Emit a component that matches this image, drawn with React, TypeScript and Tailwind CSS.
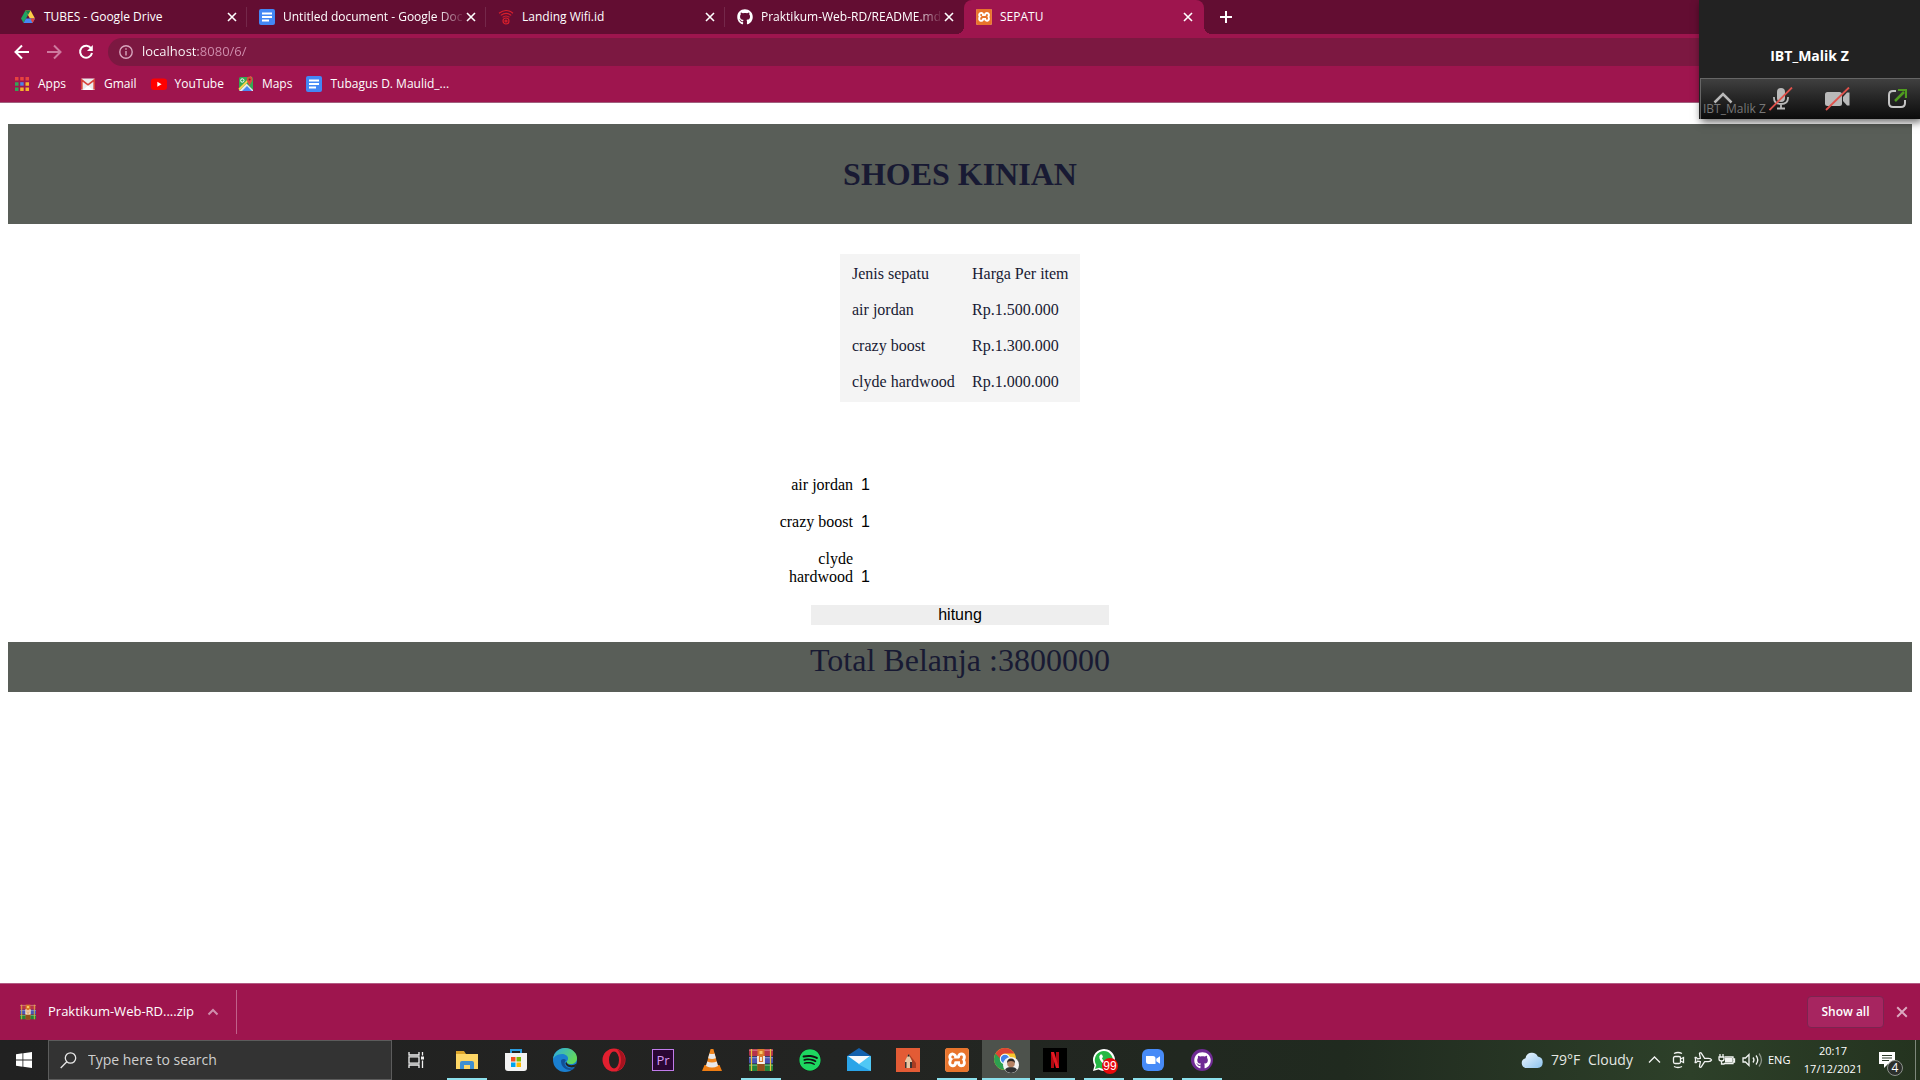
import type { ReactNode } from "react";
import { Plane } from "lucide-react";
import { FaGithub, FaSpotify } from "react-icons/fa";
import { SiXampp } from "react-icons/si";

const DocsIcon = () => (
  <svg width="16" height="16" viewBox="0 0 16 16" aria-hidden="true">
    <rect width="16" height="16" rx="2" fill="#4387f5" />
    <path d="M3 4.5h10M3 8h10M3 11.5h7" stroke="#fff" strokeWidth="1.8" />
  </svg>
);

const DriveIcon = () => (
  <svg width="16" height="16" viewBox="0 0 16 16" aria-hidden="true">
    <path d="M5.4 1.5 8 6 3.6 14 1 9.5z" fill="#1fa463" />
    <path d="M5.4 1.5h5.2L15 9.5H9.9z" fill="#ffcf48" />
    <path d="M5.4 1.5h5.2L8 6z" fill="#13854c" />
    <path d="M3.6 14 6 9.5h9L12.5 14z" fill="#4688f4" />
    <path d="M12.5 14 15 9.5h-4.6z" fill="#ea4335" />
  </svg>
);

const WifiIdIcon = () => (
  <svg width="16" height="16" viewBox="0 0 16 16" fill="none" stroke="#d9202c" strokeWidth="1.2" aria-hidden="true">
    <path d="M1 4.2q7-5.4 14 0M2.8 6.4q5.2-4.2 10.4 0M4.6 8.4q3.4-2.8 6.8 0" />
    <circle cx="8" cy="12" r="3" />
    <circle cx="8" cy="12" r="1" />
  </svg>
);

const XamppSmall = () => (
  <span className="flex size-4 rounded-xs bg-white text-[#e8742c]">
    <SiXampp size={16} />
  </span>
);

const XamppLarge = () => (
  <span className="flex size-6 rounded-sm bg-white text-[#e8742c]">
    <SiXampp size={24} />
  </span>
);

const WinrarIcon = ({ size }: { size: number }) => (
  <svg width={size} height={size} viewBox="0 0 24 24" aria-hidden="true">
    <rect y="1" width="24" height="7" rx="1" fill="#b5324a" />
    <rect y="8.5" width="24" height="7" rx="1" fill="#4855b5" />
    <rect y="16" width="24" height="7" rx="1" fill="#23843a" />
    <path d="M0 2.2h24M0 9.7h24M0 17.2h24" stroke="#fff" strokeOpacity=".4" />
    <path d="M2.5 1v22M21.5 1v22" stroke="#e7c33c" strokeWidth="1.2" />
    <rect x="8.5" y="1" width="7" height="22" fill="#d9792a" />
    <rect x="8.5" y="16" width="7" height="7" fill="#93501d" />
    <path d="M9 8v7h6V8M12 9v4" fill="none" stroke="#f5f0e6" strokeWidth="1.8" />
    <path d="M10.5 3h3v3h-3z" fill="#f6c56a" />
  </svg>
);

const AppsIcon = () => (
  <svg width="16" height="16" viewBox="0 0 16 16" aria-hidden="true">
    <path d="M1 1h3.500v3.500H1zM6.200 1h3.500v3.500H6.200zM11.500 1H15v3.500h-3.500z" fill="#e8433f" />
    <path d="M1 6.200h3.500v3.500H1zM1 11.500h3.500V15H1z" fill="#35a356" />
    <path d="M6.200 6.200h3.500v3.500H6.200z" fill="#4b82e8" />
    <path d="M11.500 6.200H15v3.500h-3.500zM6.200 11.500h3.500V15H6.200zM11.500 11.500H15V15h-3.500z" fill="#f5b32c" />
  </svg>
);

const GmailIcon = () => (
  <svg width="16" height="16" viewBox="0 0 16 16" aria-hidden="true">
    <rect x="1" y="2.500" width="14" height="11.500" rx="1" fill="#ececec" />
    <path d="M1.800 13.500V4L8 8.800 14.200 4v9.500" fill="none" stroke="#d8433b" strokeWidth="1.700" />
    <path d="M3 14 8 9.500l5 4.500z" fill="#fff" />
  </svg>
);

const YoutubeIcon = () => (
  <svg width="16" height="16" viewBox="0 0 16 16" aria-hidden="true">
    <rect y="2.500" width="16" height="11.500" rx="3" fill="#f00" />
    <path d="M6.300 5.700v5L10.600 8.200z" fill="#fff" />
  </svg>
);

const MapsIcon = () => (
  <svg width="16" height="16" viewBox="0 0 16 16" aria-hidden="true">
    <rect x="1" y="1" width="14" height="14" rx="1.500" fill="#35a853" />
    <path d="M1 15 8.500 7.500 15 14v1z" fill="#e9e9e9" />
    <path d="m4 15 5-5 5 5z" fill="#4a89f3" />
    <path d="M1 13.500 13.500 1" stroke="#fbd04a" strokeWidth="1.800" />
    <circle cx="4.300" cy="4.500" r="1.700" fill="none" stroke="#fff" strokeWidth="1" />
    <path d="M11.500 10C11 7.500 8.800 6 8.800 3.400a2.800 2.800 0 0 1 5.600 0C14.400 6 12 7.500 11.500 10z" fill="#dd4b3e" />
    <circle cx="11.600" cy="3.400" r="1" fill="#7d231d" />
  </svg>
);

const Cross = ({ size = 10 }: { size?: number }) => (
  <svg width={size} height={size} viewBox="0 0 10 10" stroke="currentColor" strokeWidth="1.600" aria-hidden="true">
    <path d="m1 1 8 8M9 1 1 9" />
  </svg>
);

type Tab = { title: string; icon: ReactNode; active?: boolean };

const tabs: Tab[] = [
  { title: "TUBES - Google Drive", icon: <DriveIcon /> },
  { title: "Untitled document - Google Doc", icon: <DocsIcon /> },
  { title: "Landing Wifi.id", icon: <WifiIdIcon /> },
  { title: "Praktikum-Web-RD/README.md", icon: <FaGithub size={16} /> },
  { title: "SEPATU", icon: <XamppSmall />, active: true },
];

function TabStrip() {
  return (
    <div className="flex h-[34px] items-stretch bg-[#630d32] pl-2">
      {tabs.map((tab, i) => (
        <div
          key={tab.title}
          className={
            tab.active
              ? "relative flex w-60 items-center rounded-t-lg bg-[#9e154e] pl-3"
              : "relative flex w-[239px] items-center pl-3"
          }
        >
          {tab.active && (
            <>
              <span className="absolute bottom-0 -left-2 size-2 bg-[radial-gradient(circle_at_0_0,#630d32_8px,#9e154e_8px)]" />
              <span className="absolute -right-2 bottom-0 size-2 bg-[radial-gradient(circle_at_100%_0,#630d32_8px,#9e154e_8px)]" />
            </>
          )}
          {tab.icon}
          <span
            className={
              tab.title.length > 20
                ? "ml-2 w-[182px] text-xs whitespace-nowrap [mask-image:linear-gradient(90deg,#000_155px,transparent_182px)]"
                : "ml-2 w-[182px] text-xs whitespace-nowrap"
            }
          >
            {tab.title}
          </span>
          <button type="button" aria-label={`Close ${tab.title}`} className="ml-px flex">
            <Cross />
          </button>
          {i < 3 && <span className="absolute right-0 h-5 w-px bg-[#83406088] self-center" />}
        </div>
      ))}
      <button type="button" aria-label="New tab" className="ml-4 flex items-center">
        <svg width="12" height="12" viewBox="0 0 12 12" stroke="#fff" strokeWidth="2">
          <path d="M6 0v12M0 6h12" />
        </svg>
      </button>
    </div>
  );
}

function AddressRow() {
  return (
    <div className="flex h-9 items-start pt-1 pl-3.5">
      <div className="flex h-7 shrink-0 items-center gap-4">
        <button type="button" aria-label="Back">
          <svg width="16" height="16" viewBox="0 0 16 16" fill="none" stroke="#fff" strokeWidth="2">
            <path d="M15 8H2M8 1.500 1.500 8 8 14.500" />
          </svg>
        </button>
        <button type="button" aria-label="Forward">
          <svg width="16" height="16" viewBox="0 0 16 16" fill="none" stroke="#ce7a9f" strokeWidth="2">
            <path d="M1 8h13M8 1.500 14.500 8 8 14.500" />
          </svg>
        </button>
        <button type="button" aria-label="Reload">
          <svg width="16" height="16" viewBox="0 0 16 16" fill="none" stroke="#fff" strokeWidth="2">
            <path d="M13.200 4.500A6 6 0 1 0 14 9" />
            <path d="M14.800 1v6H9z" fill="#fff" stroke="none" />
          </svg>
        </button>
      </div>
      <div className="ml-3.5 flex h-7 flex-1 items-center rounded-l-full bg-[#7c1841] pl-[11px]">
        <svg width="14" height="14" viewBox="0 0 14 14" fill="none" stroke="#d8a6bd" strokeWidth="1.400" aria-hidden="true">
          <circle cx="7" cy="7" r="6.200" />
          <path d="M7 6v4.500M7 3.300v1.500" />
        </svg>
        <input
          aria-label="Address"
          defaultValue="localhost:8080/6/"
          className="ml-[9px] flex-1 bg-[linear-gradient(90deg,#ffffff_56px,#d08fae_56px)] bg-clip-text text-[13px] text-transparent outline-none"
        />
      </div>
    </div>
  );
}

function Bookmark({ icon, label }: { icon: ReactNode; label: string }) {
  return (
    <a href="#" className="flex items-center gap-2">
      {icon}
      {label}
    </a>
  );
}

function Bookmarks() {
  return (
    <nav className="flex h-[33px] items-center gap-3.5 border-b border-[#a0607e] pb-1 pl-3.5 text-xs">
      <Bookmark icon={<AppsIcon />} label="Apps" />
      <Bookmark icon={<GmailIcon />} label="Gmail" />
      <Bookmark icon={<YoutubeIcon />} label="YouTube" />
      <Bookmark icon={<MapsIcon />} label="Maps" />
      <Bookmark icon={<DocsIcon />} label="Tubagus D. Maulid_..." />
    </nav>
  );
}

const prices = [
  ["air jordan", "Rp.1.500.000"],
  ["crazy boost", "Rp.1.300.000"],
  ["clyde hardwood", "Rp.1.000.000"],
];

function ShopPage() {
  return (
    <main className="flex-1 bg-white px-2 pt-[21px] font-['Liberation_Serif',serif] text-base text-black">
      <h1 className="bg-[#595e58] py-8 text-center text-[32px] leading-9 font-bold text-[#181a33]">SHOES KINIAN</h1>
      <table className="mx-auto mt-[30px] w-60 border-separate border-spacing-0 bg-[#f4f4f4] py-0.5 text-left text-[#181a33]">
        <thead>
          <tr className="h-9">
            <th className="w-[132px] pl-3 font-normal whitespace-nowrap">Jenis sepatu</th>
            <th className="font-normal whitespace-nowrap">Harga Per item</th>
          </tr>
        </thead>
        <tbody>
          {prices.map(([name, price]) => (
            <tr key={name} className="h-9">
              <td className="pl-3 whitespace-nowrap">{name}</td>
              <td>{price}</td>
            </tr>
          ))}
        </tbody>
      </table>
      <form className="mx-auto mt-[74px] flex w-[374px] flex-col gap-[19px]">
        {prices.map(([name]) => (
          <div key={name} className="flex items-end gap-2">
            <label htmlFor={name} className="w-20 text-right leading-[18px]">
              {name}
            </label>
            <input
              id={name}
              defaultValue="1"
              className="h-[18px] min-w-0 flex-1 font-['Liberation_Sans',sans-serif] text-base leading-[18px] outline-none"
            />
          </div>
        ))}
        <button
          type="button"
          className="h-5 w-[298px] self-center bg-[#eeeeee] font-['Liberation_Sans',sans-serif] text-base leading-5"
        >
          hitung
        </button>
      </form>
      <p className="mt-[17px] bg-[#595e58] pb-3.5 text-center text-[32px] leading-9 text-[#181a33]">
        Total Belanja :3800000
      </p>
    </main>
  );
}

function DownloadBar() {
  return (
    <div className="flex h-[57px] items-center border-t border-[#b35a83] bg-[#9e154e] pr-3">
      <div className="flex h-11 w-[237px] items-center border-r border-[#c0618a] pl-5">
        <WinrarIcon size={16} />
        <span className="ml-3 w-[145px] text-[13px] whitespace-nowrap">Praktikum-Web-RD....zip</span>
        <button type="button" aria-label="Download options" className="ml-3.5">
          <svg width="12" height="8" viewBox="0 0 12 8" fill="none" stroke="#cf8fac" strokeWidth="2">
            <path d="m1.500 6.500 4.500-4.500 4.500 4.500" />
          </svg>
        </button>
      </div>
      <button
        type="button"
        className="ml-auto h-8 w-[77px] rounded border border-[#7c2450] bg-[#a72560] text-xs font-semibold"
      >
        Show all
      </button>
      <button type="button" aria-label="Close downloads bar" className="ml-3 text-[#dca9c0]">
        <Cross size={12} />
      </button>
    </div>
  );
}

const apps: { name: string; icon: ReactNode; open?: boolean; current?: boolean }[] = [
  {
    name: "File Explorer",
    open: true,
    icon: (
      <svg width="24" height="24" viewBox="0 0 24 24">
        <path d="M1 3h8l2 3h11v3H1z" fill="#dda52b" />
        <rect x="1" y="6" width="22" height="15" fill="#fdd666" />
        <path d="M5 21v-6q0-2 2-2h10q2 0 2 2v6h-4v-4H9v4z" fill="#3f8fd2" />
      </svg>
    ),
  },
  {
    name: "Microsoft Store",
    icon: (
      <svg width="24" height="24" viewBox="0 0 24 24">
        <path d="M7 5V2h10v3" fill="none" stroke="#2b9de0" strokeWidth="2" />
        <path d="M1 5h22v15q0 3-3 3H4q-3 0-3-3z" fill="#f3f3f3" />
        <path d="M7 9h4.500v4.500H7z" fill="#f25022" />
        <path d="M12.500 9H17v4.500h-4.500z" fill="#7fba00" />
        <path d="M7 14.500h4.500V19H7z" fill="#00a4ef" />
        <path d="M12.500 14.500H17V19h-4.500z" fill="#ffb900" />
      </svg>
    ),
  },
  {
    name: "Edge",
    icon: (
      <svg width="24" height="24" viewBox="0 0 24 24">
        <defs>
          <linearGradient id="edge-top" x1="0" y1="0" x2="1" y2=".5">
            <stop offset="0" stopColor="#2aa8e8" />
            <stop offset="1" stopColor="#63d95b" />
          </linearGradient>
        </defs>
        <circle cx="12" cy="12" r="12" fill="#1a7fd0" />
        <path d="M0 11C1 4 6 0 12 0c7 0 12 5 12 10 0 4-3 6-6 6-4 0-5-2-4-3 1-1 1-2 1-3 0-2-3-4-6-4-5 0-8 3-9 5z" fill="url(#edge-top)" />
        <path d="M8 13c0 6 5 9 9 9 2 0 4-1 5-2-2 1-8 1-10-3-1-2 0-4 1-5-2-2-5-1-5 1z" fill="#124f96" />
        <path d="M23.500 15.500c-3 2.500-9 2.500-10-1.500l-1 1c0 4 6 5.500 10 3.500z" fill="#222321" />
      </svg>
    ),
  },
  {
    name: "Opera",
    icon: (
      <svg width="24" height="24" viewBox="0 0 24 24">
        <circle cx="12" cy="12" r="11.500" fill="#e21f2f" />
        <path d="M15 1a11.500 11.500 0 0 1 0 22q4-5 4-11T15 1z" fill="#a5131f" />
        <ellipse cx="12" cy="12" rx="5" ry="8.500" fill="#222321" />
      </svg>
    ),
  },
  {
    name: "Premiere Pro",
    icon: (
      <span className="flex size-[22px] items-center justify-center border border-[#c07bea] bg-[#2a0634] text-[13px] leading-4 text-[#d79bf5]">
        Pr
      </span>
    ),
  },
  {
    name: "VLC",
    icon: (
      <svg width="24" height="24" viewBox="0 0 24 24">
        <path d="M4.500 17h15l2.500 6H2z" fill="#ef7d12" />
        <path d="M10.600 1h2.800l4.600 17q-6 3-12 0z" fill="#f0841b" />
        <path d="m9.400 5.500-1.300 4.700q4 1.500 7.800 0l-1.300-4.700q-2.600 1-5.200 0zM7.200 13.500 6 18q6 3 12 0l-1.200-4.500q-4.800 2-9.600 0z" fill="#e9e9e9" />
      </svg>
    ),
  },
  { name: "WinRAR", open: true, icon: <WinrarIcon size={24} /> },
  {
    name: "Spotify",
    icon: (
      <span className="rounded-full bg-[#111] text-[#1ed760]">
        <FaSpotify size={22} />
      </span>
    ),
  },
  {
    name: "Mail",
    icon: (
      <svg width="24" height="24" viewBox="0 0 24 24">
        <path d="M0 8 12 0l12 8v4H0z" fill="#1361ae" />
        <path d="M0 8h24v15H0z" fill="#2aa4e8" />
        <path d="M24 8v15L11 16z" fill="#50c8f5" />
        <path d="M1 8h22l-11 8z" fill="#f5f9fc" />
      </svg>
    ),
  },
  {
    name: "Sketchbook",
    icon: (
      <svg width="24" height="24" viewBox="0 0 24 24">
        <path d="M0 0h24v24H0z" fill="#e35b35" />
        <path d="m13 6 7 9v5H9z" fill="#a83c22" />
        <path d="M9 20v-7l3.500-7 3.500 7v7z" fill="#e7c7a4" />
        <path d="M9 14h1.500v6H9zM14 14h2v6h-2z" fill="#3a3433" />
        <path d="m11.300 8.400 1.200-2.400 1.200 2.400z" fill="#222" />
      </svg>
    ),
  },
  { name: "XAMPP", open: true, icon: <XamppLarge /> },
  {
    name: "Chrome",
    open: true,
    current: true,
    icon: (
      <svg width="26" height="26" viewBox="0 0 26 26">
        <circle cx="12" cy="12" r="11" fill="#f9c82d" />
        <path d="M2.500 6.500A11 11 0 0 0 12 23l4-8-4-3z" fill="#2d9f50" />
        <path d="M2.500 6.500A11 11 0 0 1 21.500 6.500H12q-4 0-5 5z" fill="#dd4334" />
        <circle cx="12" cy="12" r="5.200" fill="#fff" />
        <circle cx="12" cy="12" r="4.200" fill="#4382ea" />
        <circle cx="18" cy="18" r="8" fill="#f2f2f2" />
        <path d="M12 23q1-3 6-3t6 3q-2.500 3-6 3t-6-3z" fill="#2f3133" />
        <circle cx="18" cy="16.500" r="3.800" fill="#b48163" />
        <path d="M14 16q0-4.500 4-4.500t4 4.500q-1-2-4-2t-4 2z" fill="#282422" />
      </svg>
    ),
  },
  {
    name: "Netflix",
    open: true,
    icon: (
      <svg width="24" height="24" viewBox="0 0 24 24">
        <path d="M0 0h24v24H0z" fill="#000" />
        <path d="M8 4h3v16H8zM13 4h3v16h-3z" fill="#b10912" />
        <path d="M8 4h3l5 16h-3z" fill="#e51a24" />
      </svg>
    ),
  },
  {
    name: "WhatsApp",
    open: true,
    icon: (
      <span className="relative flex">
        <svg width="24" height="24" viewBox="0 0 24 24">
          <path d="M1 23 2.500 17.500A11 11 0 1 1 6.500 21.500z" fill="#fff" />
          <path d="M3 21 4.300 17A9 9 0 1 1 7.300 19.800z" fill="#25b844" />
          <path d="M8.500 6.500q-2 1.500-1 4 2 5 6.500 6.500 2.500.5 3.500-1.500v-1.500L15 12.800l-1.400 1.400Q11 13 9.900 10.300L11 9l-1-2.500z" fill="#fff" />
        </svg>
        <span className="absolute top-2.5 left-2.5 flex size-4 items-center justify-center rounded-full bg-[#e8090c] font-['Liberation_Sans',sans-serif] text-xs text-white">
          99
        </span>
      </span>
    ),
  },
  {
    name: "Zoom",
    open: true,
    icon: (
      <svg width="22" height="22" viewBox="0 0 22 22">
        <rect width="22" height="22" rx="6" fill="#478bf7" />
        <path d="M4 7h7q2.500 0 2.500 2.500V15h-7Q4 15 4 12.500zM14.300 9.700 18 7.300v7.400l-3.700-2.400z" fill="#fff" />
      </svg>
    ),
  },
  {
    name: "GitHub Desktop",
    open: true,
    icon: (
      <span className="flex size-[22px] items-center justify-center rounded-full bg-[#6f2b94] text-white">
        <FaGithub size={17} />
      </span>
    ),
  },
];

function Tray() {
  return (
    <div className="ml-auto flex items-center">
      <svg width="22" height="16" viewBox="0 0 22 16" aria-hidden="true">
        <defs>
          <linearGradient id="cloud" x1="0" y1="0" x2="1" y2="1">
            <stop offset="0" stopColor="#f0f8ff" />
            <stop offset="1" stopColor="#8cc3ee" />
          </linearGradient>
        </defs>
        <path d="M5 16a5 5 0 0 1-.5-9.800A6.500 6.500 0 0 1 16.800 4.500 5.800 5.800 0 0 1 16.500 16z" fill="url(#cloud)" />
      </svg>
      <span className="ml-2 w-[37px] text-sm whitespace-nowrap text-[#e4e8e3]">79°F</span>
      <span className="w-[60px] text-sm text-[#e4e8e3]">Cloudy</span>
      <svg width="104" height="18" viewBox="0 0 104 18" fill="none" stroke="#f2f4f2" strokeWidth="1.300" aria-hidden="true">
        <path d="m1 11.500 5.500-5.500 5.500 5.500" />
        <rect x="25.500" y="5.500" width="7" height="7" rx="1.500" />
        <path d="m32.500 8 3-1.500v5l-3-1.500M26 2.500q4-2 8 0M26 15.500q4 2 8 0" />
        <g transform="rotate(45 54 9)">
          <Plane x={45} y={0} size={18} strokeWidth={1.700} stroke="#f2f4f2" />
        </g>
        <path d="M77 6h8v6.500h-9M85 8h1.500v3H85" />
        <path d="M77 7h7v4.500h-7z" fill="#f2f4f2" stroke="none" />
        <path d="M72 3v3M75 3v3M71 6h5v2q0 2-2.500 2T71 8zM73.500 10v3h3" />
        <path d="M95 7h2.500L101 3.500v11L97.500 11H95z" />
      </svg>
      <svg width="12" height="18" viewBox="0 0 12 18" fill="none" stroke="#f2f4f2" strokeWidth="1.300" aria-hidden="true">
        <path d="M1 6.500q2 2.500 0 5M4 4.500q3.500 4.500 0 9" />
        <path d="M7 2.500q5 6.500 0 13" stroke="#8b9489" />
      </svg>
      <span className="ml-1 w-[33px] text-[11px] text-white">ENG</span>
      <div className="w-16 text-center text-[11px] leading-[18px] whitespace-nowrap text-white">
        20:17
        <br />
        17/12/2021
      </div>
      <button type="button" aria-label="4 notifications" className="relative mr-5 ml-3.5 flex h-10 w-4 items-center">
        <svg width="16" height="16" viewBox="0 0 16 16">
          <path d="M0 0h16v12H9l-4 4v-4H0z" fill="#fff" />
          <path d="M3 3.500h10M3 6h10M3 8.500h7" stroke="#2b3a29" strokeWidth="1.200" />
        </svg>
        <span className="absolute top-5 left-2 flex size-4 items-center justify-center rounded-full border border-[#8d928c] bg-[#2b2f2b] text-xs text-white">
          4
        </span>
      </button>
      <span className="mr-1 h-10 w-px bg-[#7d877b]" />
    </div>
  );
}

function Taskbar() {
  return (
    <footer className="flex h-10 items-center bg-[linear-gradient(90deg,#212121_0%,#232422_45%,#202a1f_70%,#2d4029_88%,#24331f_100%)]">
      <button type="button" aria-label="Start" className="flex w-12 justify-center">
        <svg width="16" height="16" viewBox="0 0 16 16" fill="#fff">
          <path d="M0 2.200 6.500 1.300v6.300H0zM7.300 1.200 16 0v7.600H7.300zM0 8.400h6.500v6.300L0 13.800zM7.300 8.400H16V16l-8.700-1.200z" />
        </svg>
      </button>
      <div className="flex h-10 w-[344px] items-center border border-[#5c5c5c] bg-[#333333] pl-[11px]">
        <svg width="17" height="17" viewBox="0 0 17 17" fill="none" stroke="#e8e8e8" strokeWidth="1.300" aria-hidden="true">
          <circle cx="10.500" cy="6" r="5.200" />
          <path d="M6.800 9.700.7 16" />
        </svg>
        <input
          aria-label="Search"
          placeholder="Type here to search"
          className="ml-[11px] flex-1 text-sm outline-none placeholder:text-[#cfcfcf]"
        />
      </div>
      <button type="button" aria-label="Task view" className="mr-[3px] flex w-12 justify-center">
        <svg width="16" height="16" viewBox="0 0 16 16" fill="none" stroke="#f2f2f2" strokeWidth="1.300">
          <path d="M1 0v3h10V0M1 16v-3h10v3M1 4.800h10v6.400H1zM14.500 0v3.500M14.500 8.500V16" />
          <path d="M13 4.500h3v3h-3z" fill="#f2f2f2" stroke="none" />
        </svg>
      </button>
      <div className="flex">
        {apps.map((app) => (
          <button
            key={app.name}
            type="button"
            aria-label={app.name}
            className={
              app.current
                ? "relative mr-px flex h-10 w-12 items-center justify-center bg-[#4d524c]"
                : "relative mr-px flex h-10 w-12 items-center justify-center"
            }
          >
            {app.icon}
            {app.open && (
              <span
                className={
                  app.current ? "absolute inset-x-0 bottom-0 h-0.5 bg-[#8ce0ec]" : "absolute inset-x-1 bottom-0 h-0.5 bg-[#8ce0ec]"
                }
              />
            )}
          </button>
        ))}
      </div>
      <Tray />
    </footer>
  );
}

function CallOverlay() {
  return (
    <aside className="absolute top-0 right-0 w-[221px] bg-[#222222] shadow-[2px_3px_8px_rgba(0,0,0,0.6)]">
      <div className="flex h-[78px] items-end justify-center pb-3 text-sm leading-5 font-bold text-white">
        IBT_Malik Z
      </div>
      <div className="relative ml-px flex h-[41px] items-center border-t border-l border-[#666] bg-linear-to-b from-[#404040] to-[#0c0c0c] pl-3">
        <button type="button" aria-label="Collapse">
          <svg width="20" height="20" viewBox="0 0 20 20" fill="none" stroke="#b9b9b9" strokeWidth="2.500">
            <path d="m1.500 13.500 8.500-8.500 8.500 8.500" />
          </svg>
        </button>
        <button type="button" aria-label="Unmute" className="ml-9">
          <svg width="24" height="24" viewBox="0 0 24 24" fill="none">
            <rect x="8" y="1" width="8" height="14" rx="4" fill="#b9b9b9" />
            <path d="M5 10v1q0 6 7 6t7-6v-1M12 17v4M8 21.500h8" stroke="#b9b9b9" strokeWidth="1.800" />
            <path d="M.500 23 23 .500" stroke="#e0524c" strokeWidth="1.800" />
          </svg>
        </button>
        <button type="button" aria-label="Start video" className="ml-8">
          <svg width="25" height="24" viewBox="0 0 25 24">
            <rect x="0" y="5" width="17" height="14" rx="2.500" fill="#b9b9b9" />
            <path d="m18 10 4-4.500h2.500v13H22L18 14z" fill="#b9b9b9" />
            <path d="M1 23 24 .500" stroke="#e0524c" strokeWidth="1.800" />
          </svg>
        </button>
        <button type="button" aria-label="Open in window" className="ml-[37px]">
          <svg width="20" height="20" viewBox="0 0 20 20" fill="none" strokeWidth="2">
            <path d="M9 2H6Q2 2 2 6v8q0 4 4 4h8q4 0 4-4v-3" stroke="#c4c4c4" />
            <path d="m8 12 9-9" stroke="#4f9a1f" strokeWidth="2.500" />
            <path d="M11 1h8v8" stroke="#4f9a1f" strokeWidth="2.200" />
          </svg>
        </button>
        <span className="absolute bottom-0 left-0.5 text-xs leading-5 text-[#777]">IBT_Malik Z</span>
      </div>
    </aside>
  );
}

export default function App() {
  return (
    <div className="relative flex min-h-screen flex-col overflow-hidden bg-white font-['Open_Sans','Noto_Sans',sans-serif] text-white">
      <header className="bg-[#9e154e]">
        <TabStrip />
        <AddressRow />
        <Bookmarks />
      </header>
      <ShopPage />
      <DownloadBar />
      <Taskbar />
      <CallOverlay />
    </div>
  );
}
